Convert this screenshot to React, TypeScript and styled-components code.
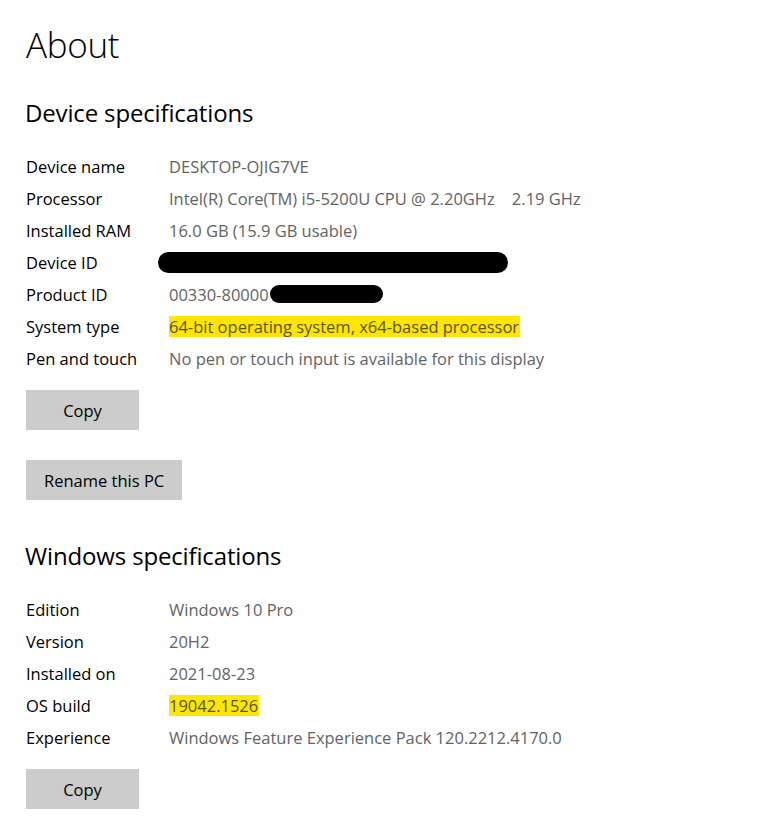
import React from "react";
import styled, { createGlobalStyle } from "styled-components";

const Global = createGlobalStyle`
  html, body { margin: 0; padding: 0; background: #ffffff; }
  body { font-family: "Open Sans", "Noto Sans", Arial, sans-serif; color: #000; }
`;

const Page = styled.div`
  padding: 21px 0 0 26px;
  width: 736px;
`;

const Title = styled.h1`
  margin: 0;
  font-size: 35px;
  font-weight: 300;
  line-height: 48px;
  letter-spacing: -0.3px;
`;

const SectionTitle = styled.h2<{ $top: number }>`
  margin: ${(p) => p.$top}px 0 0 -1px;
  font-size: 24px;
  font-weight: 400;
  line-height: 34px;
  letter-spacing: -0.15px;
`;

const SpecList = styled.dl`
  margin: 20px 0 0 0;
  display: grid;
  grid-template-columns: 143px 1fr;
  grid-auto-rows: 32px;
  align-items: center;
  font-size: 16.5px;
  letter-spacing: 0px;
`;

const Label = styled.dt`
  margin: 0;
  color: #000;
  line-height: 21px;
`;

const Value = styled.dd`
  margin: 0;
  color: #636363;
  line-height: 21px;
  white-space: pre;
  display: flex;
  align-items: center;
`;

const Highlight = styled.mark`
  background: #ffe600;
  color: #57531c;
  padding: 0 1px 0 0;
`;

const Redaction = styled.span<{ $w: number; $h: number; $ml: number }>`
  display: inline-block;
  width: ${(p) => p.$w}px;
  height: ${(p) => p.$h}px;
  margin-left: ${(p) => p.$ml}px;
  background: #000;
  border-radius: ${(p) => p.$h / 2}px;
`;

const Actions = styled.div<{ $top: number }>`
  margin-top: ${(p) => p.$top}px;
  display: flex;
  flex-direction: column;
  align-items: flex-start;
  gap: 30px;
`;

const Button = styled.button`
  height: 40px;
  min-width: 113px;
  padding: 0 18px;
  border: none;
  border-radius: 0;
  background: #cccccc;
  color: #000;
  font-family: "Open Sans", "Noto Sans", Arial, sans-serif;
  font-size: 16.5px;
  letter-spacing: 0px;
  cursor: pointer;
`;

type Spec = { label: string; value: React.ReactNode };

const device: Spec[] = [
  { label: "Device name", value: "DESKTOP-OJIG7VE" },
  { label: "Processor", value: "Intel(R) Core(TM) i5-5200U CPU @ 2.20GHz    2.19 GHz" },
  { label: "Installed RAM", value: "16.0 GB (15.9 GB usable)" },
  { label: "Device ID", value: <Redaction $w={350} $h={21} $ml={-11} /> },
  {
    label: "Product ID",
    value: (
      <>
        00330-80000
        <Redaction $w={113} $h={18} $ml={1} />
      </>
    ),
  },
  { label: "System type", value: <Highlight>64-bit operating system, x64-based processor</Highlight> },
  { label: "Pen and touch", value: "No pen or touch input is available for this display" },
];

const windows: Spec[] = [
  { label: "Edition", value: "Windows 10 Pro" },
  { label: "Version", value: "20H2" },
  { label: "Installed on", value: "2021-08-23" },
  { label: "OS build", value: <Highlight>19042.1526</Highlight> },
  { label: "Experience", value: "Windows Feature Experience Pack 120.2212.4170.0" },
];

const Specs = ({ items }: { items: Spec[] }) => (
  <SpecList>
    {items.map((s) => (
      <React.Fragment key={s.label}>
        <Label>{s.label}</Label>
        <Value>{s.value}</Value>
      </React.Fragment>
    ))}
  </SpecList>
);

export default function App() {
  return (
    <>
      <Global />
      <Page>
        <Title>About</Title>
        <SectionTitle $top={27}>Device specifications</SectionTitle>
        <Specs items={device} />
        <Actions $top={16}>
          <Button>Copy</Button>
          <Button>Rename this PC</Button>
        </Actions>
        <SectionTitle $top={39}>Windows specifications</SectionTitle>
        <Specs items={windows} />
        <Actions $top={16}>
          <Button>Copy</Button>
        </Actions>
      </Page>
    </>
  );
}
